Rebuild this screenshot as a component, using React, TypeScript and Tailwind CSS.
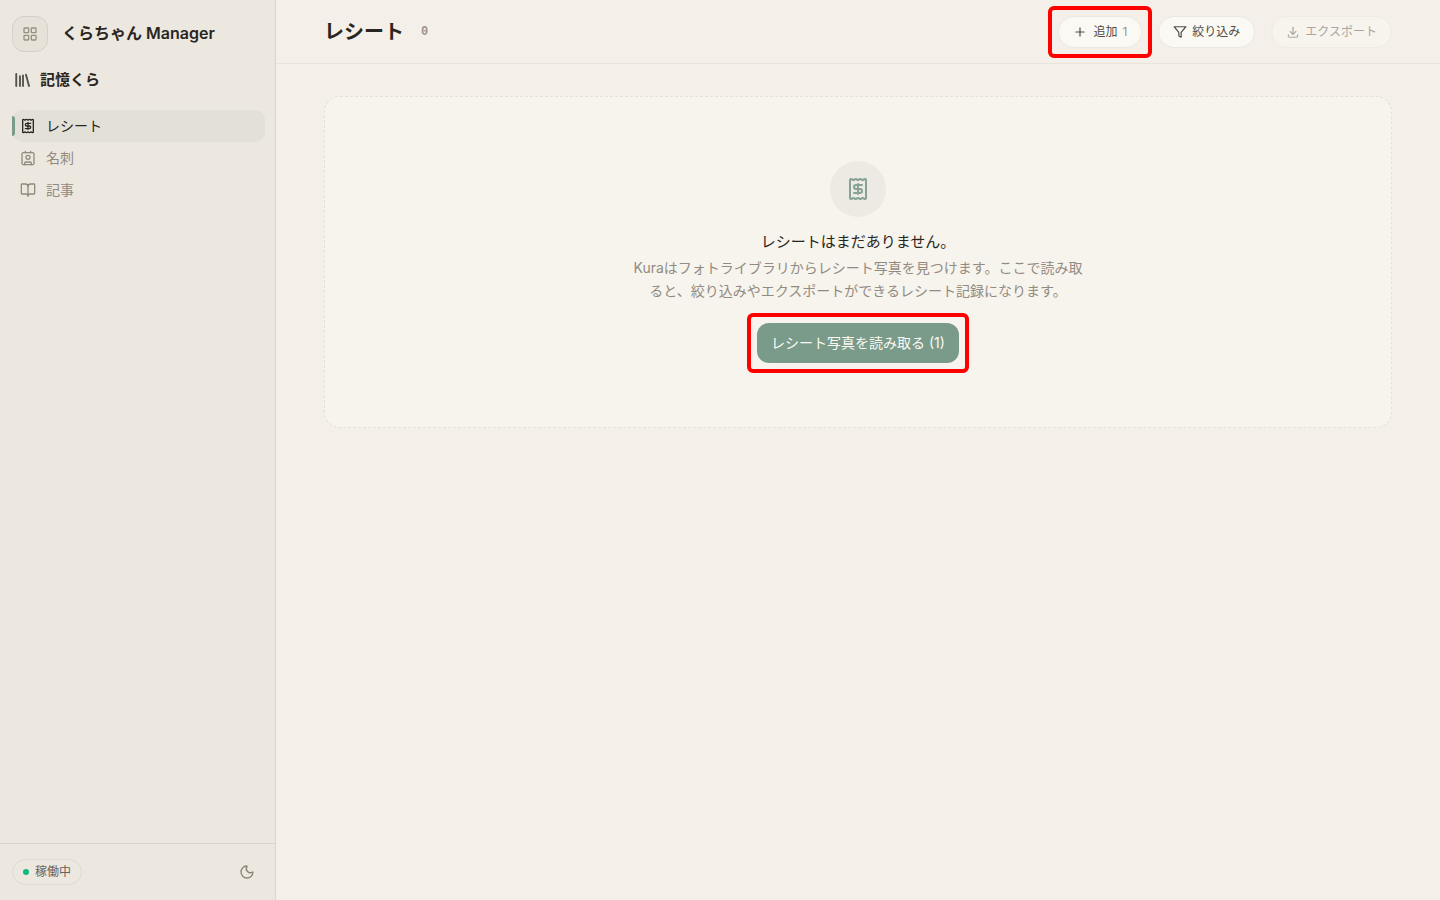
import React from "react";
import { BookOpen, LayoutGrid, Moon, Plus } from "lucide-react";
import { LuFilter } from "react-icons/lu";
import { TbDownload } from "react-icons/tb";

type IconProps = { className?: string };

function ReceiptIcon({ className }: IconProps) {
  return (
    <svg viewBox="0 0 24 24" fill="none" stroke="currentColor" strokeWidth="2" strokeLinecap="round" strokeLinejoin="round" className={className} aria-hidden="true">
      <path d="M12 17V7" />
      <path d="M16 8h-6a2 2 0 0 0 0 4h4a2 2 0 0 1 0 4H8" />
      <path d="M4 3a1 1 0 0 1 1-1 1.3 1.3 0 0 1 .7.2l.933.6a1.3 1.3 0 0 0 1.4 0l.934-.6a1.3 1.3 0 0 1 1.4 0l.933.6a1.3 1.3 0 0 0 1.4 0l.933-.6a1.3 1.3 0 0 1 1.4 0l.934.6a1.3 1.3 0 0 0 1.4 0l.933-.6A1.3 1.3 0 0 1 19 2a1 1 0 0 1 1 1v18a1 1 0 0 1-1 1 1.3 1.3 0 0 1-.7-.2l-.933-.6a1.3 1.3 0 0 0-1.4 0l-.934.6a1.3 1.3 0 0 1-1.4 0l-.933-.6a1.3 1.3 0 0 0-1.4 0l-.933.6a1.3 1.3 0 0 1-1.4 0l-.934-.6a1.3 1.3 0 0 0-1.4 0l-.933.6a1.3 1.3 0 0 1-.7.2 1 1 0 0 1-1-1z" />
    </svg>
  );
}

function CardIcon({ className }: IconProps) {
  return (
    <svg viewBox="0 0 24 24" fill="none" stroke="currentColor" strokeWidth="2" strokeLinecap="round" strokeLinejoin="round" className={className} aria-hidden="true">
      <path d="M16 2v2M8 2v2M7 22v-2a2 2 0 0 1 2-2h6a2 2 0 0 1 2 2v2" />
      <circle cx="12" cy="11" r="3" />
      <rect x="3" y="4" width="18" height="18" rx="2" />
    </svg>
  );
}

function BooksIcon({ className }: IconProps) {
  return (
    <svg viewBox="0 0 24 24" fill="none" stroke="currentColor" strokeWidth="2.5" strokeLinecap="round" strokeLinejoin="round" className={className} aria-hidden="true">
      <path d="m16 5 4 15M12 6v14M8 7v13M3 4v16" />
    </svg>
  );
}

const navItems = [
  { label: "レシート", icon: ReceiptIcon, active: true },
  { label: "名刺", icon: CardIcon, active: false },
  { label: "記事", icon: BookOpen, active: false },
];

function Sidebar() {
  return (
    <aside className="flex w-[276px] shrink-0 flex-col border-r border-[#d9d5cd] bg-[#ece7df]">
      <div className="flex items-center gap-[14px] px-3 pt-4">
        <button type="button" aria-label="メニュー" className="flex size-9 items-center justify-center rounded-xl border border-[#d5d1c8] bg-[#e6e2d9] text-[#99917f]">
          <LayoutGrid className="size-4" />
        </button>
        <span className="pb-[2px] text-base font-semibold">くらちゃん Manager</span>
      </div>
      <h2 className="mt-4 flex h-6 items-center gap-2 px-[14px] text-[15px] font-bold">
        <BooksIcon className="size-[18px] text-[#55524d]" />
        記憶くら
      </h2>
      <nav className="mt-[18px] flex-1 pr-[10px] pl-3">
        {navItems.map(({ label, icon: Icon, active }) => (
          <a
            key={label}
            href="#"
            aria-current={active ? "page" : undefined}
            className={active
              ? "relative flex h-8 items-center gap-[10px] rounded-[10px] bg-[#e3e0d7] px-2 text-sm text-[#292622]"
              : "flex h-8 items-center gap-[10px] rounded-[10px] px-2 text-sm text-[#928a7f]"}
          >
            {active && <span className="absolute inset-y-[6px] left-0 w-[3px] rounded-r bg-[#7a9b89]" />}
            <Icon className="size-4" />
            {label}
          </a>
        ))}
      </nav>
      <footer className="flex h-[57px] items-center justify-between border-t border-[#d9d5cd] pr-5 pl-3">
        <span className="flex h-[26px] items-center gap-[6px] rounded-full border border-[#dfdad1] px-[10px] text-xs text-[#68635c]">
          <span className="size-[6px] rounded-full bg-[#10b981]" />
          稼働中
        </span>
        <button type="button" aria-label="ダークモード" className="text-[#8c8476]">
          <Moon className="size-4" />
        </button>
      </footer>
    </aside>
  );
}

const pill = "flex h-8 items-center gap-[5px] rounded-full border border-[#ece9e2] bg-[#faf9f4] px-[14px] text-xs text-[#4e4b47]";

function Header() {
  return (
    <header className="flex h-16 items-center justify-between border-b border-[#e8e3dc] px-12">
      <div className="flex items-center gap-[17px]">
        <h1 className="text-xl font-bold">レシート</h1>
        <span className="font-['Liberation_Mono'] text-xs font-bold text-[#99938a]">0</span>
      </div>
      <div className="flex items-center">
        <div className="mr-[6px] rounded-md border-4 border-[#ff0000] p-[6px]">
          <button type="button" className={pill}>
            <Plus className="mr-px size-[14px]" />
            追加
            <span className="text-[#99938a]">1</span>
          </button>
        </div>
        <button type="button" className={pill}>
          <LuFilter className="size-[14px]" />
          絞り込み
        </button>
        <button type="button" disabled className="ml-4 flex h-8 items-center gap-[5px] rounded-full border border-[#efebe4] bg-[#f7f4ee] px-[14px] text-xs text-[#aaa59e]">
          <TbDownload className="size-[14px]" />
          エクスポート
        </button>
      </div>
    </header>
  );
}

export default function App() {
  return (
    <div className="flex min-h-screen bg-[#f4efe9] font-[Inter,'Noto_Sans_CJK_JP',sans-serif] text-[#292622]">
      <Sidebar />
      <div className="flex min-w-0 flex-1 flex-col">
        <Header />
        <main className="px-12 py-8">
          <section className="flex flex-col items-center rounded-2xl border border-dashed border-[#e4e1d9] bg-[#f7f4ed] px-6 pt-16 pb-[54px] text-center">
            <div className="flex size-14 items-center justify-center rounded-full bg-[#edeae4] text-[#86a292]">
              <ReceiptIcon className="size-6" />
            </div>
            <h2 className="mt-[13px] text-[15px] leading-6">レシートはまだありません。</h2>
            <p className="mt-[2px] max-w-[456px] text-sm leading-[23px] text-[#928b82]">
              Kuraはフォトライブラリからレシート写真を見つけます。ここで読み取ると、絞り込みやエクスポートができるレシート記録になります。
            </p>
            <div className="mt-[11px] rounded-md border-4 border-[#ff0000] p-[6px]">
              <button type="button" className="h-10 rounded-xl bg-[#7a9b89] px-[14px] text-sm text-[#faf9f4]">
                レシート写真を読み取る (1)
              </button>
            </div>
          </section>
        </main>
      </div>
    </div>
  );
}
